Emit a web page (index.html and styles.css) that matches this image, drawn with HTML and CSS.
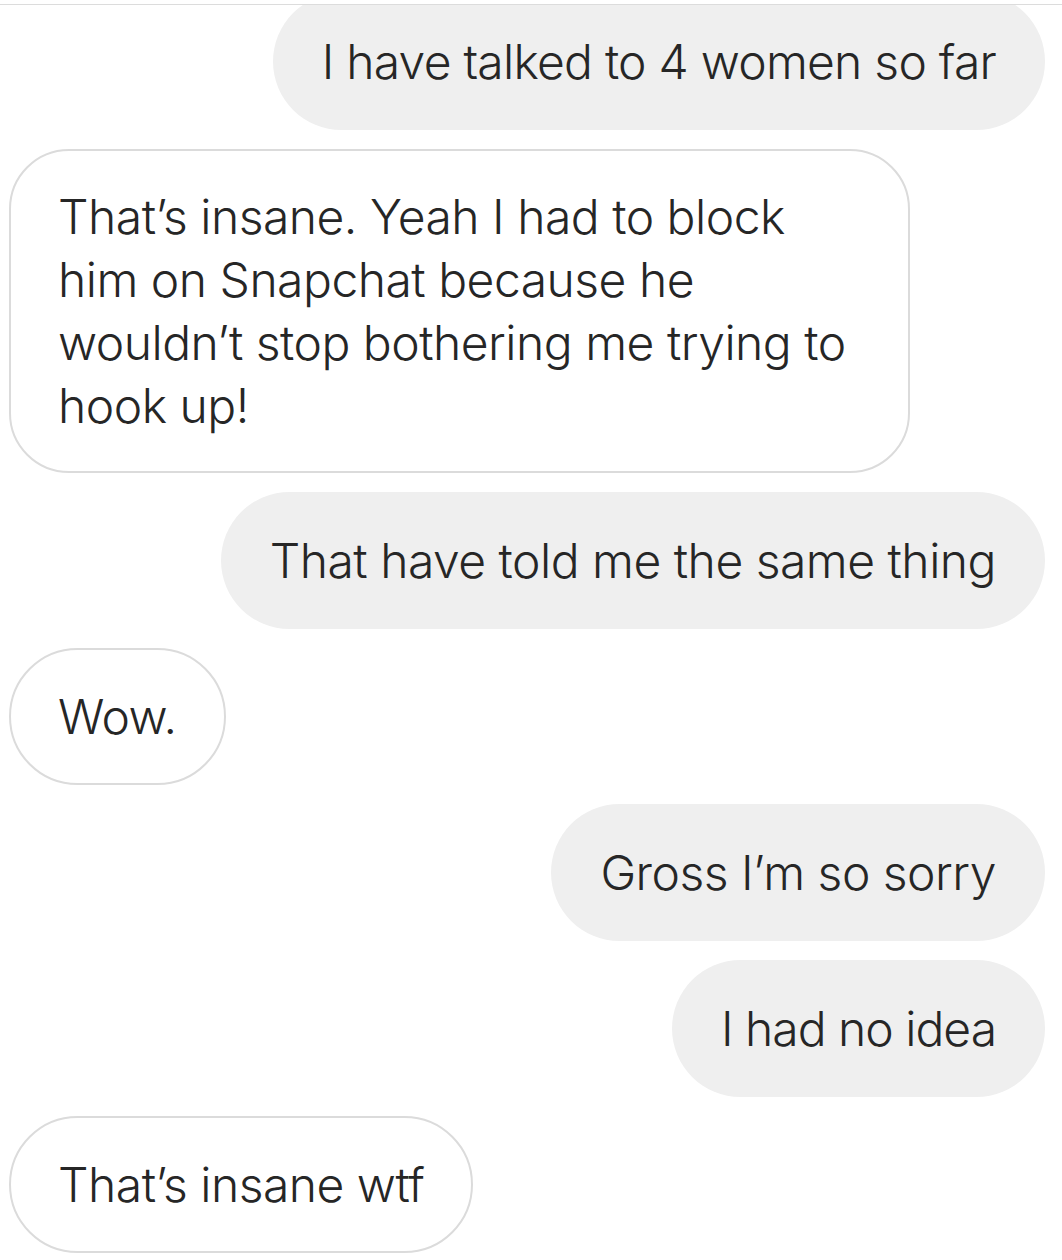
FILE: index.html
```html
<!DOCTYPE html>
<html>
<head>
<meta charset="utf-8">
<link rel="stylesheet" href="styles.css">
</head>
<body>
<div class="topbar"></div>
<div class="viewport">
  <div class="thread">
    <div class="msg out tight">I have talked to 4 women so far</div>
    <div class="msg in wide">That’s insane. Yeah I had to block<br>him on Snapchat because he<br>wouldn’t stop bothering me trying to<br>hook up!</div>
    <div class="msg out">That have told me the same thing</div>
    <div class="msg in">Wow.</div>
    <div class="msg out">Gross I’m so sorry</div>
    <div class="msg out tighter">I had no idea</div>
    <div class="msg in">That’s insane wtf</div>
  </div>
</div>
</body>
</html>
```
FILE: styles.css
```css
html, body {
  margin: 0;
  padding: 0;
  background: #ffffff;
}
body {
  font-family: Inter, "Liberation Sans", sans-serif;
  font-weight: 350;
  color: #262626;
  width: 1062px;
  height: 1260px;
  overflow: hidden;
}
.topbar {
  height: 4px;
  border-bottom: 1px solid #dcdcdc;
}
.viewport {
  height: 1255px;
  overflow: hidden;
}
.thread {
  margin-top: -12px;
  padding: 0 17px 0 9px;
  display: flex;
  flex-direction: column;
  gap: 19px;
}
.msg {
  box-sizing: border-box;
  font-size: 48px;
  line-height: 63px;
  letter-spacing: -0.5px;
  padding: 37px 49px;
  border-radius: 69px;
  max-width: 901px;
  white-space: nowrap;
}
.msg.tight {
  letter-spacing: -0.75px;
}
.msg.tighter {
  letter-spacing: -1px;
}
.msg.out {
  align-self: flex-end;
  background: #efefef;
}
.msg.in {
  align-self: flex-start;
  background: #ffffff;
  border: 2px solid #dbdbdb;
  padding: 35px 47px;
}
.msg.wide {
  width: 901px;
  border-radius: 60px;
  padding-top: 34px;
  padding-bottom: 34px;
}
```
